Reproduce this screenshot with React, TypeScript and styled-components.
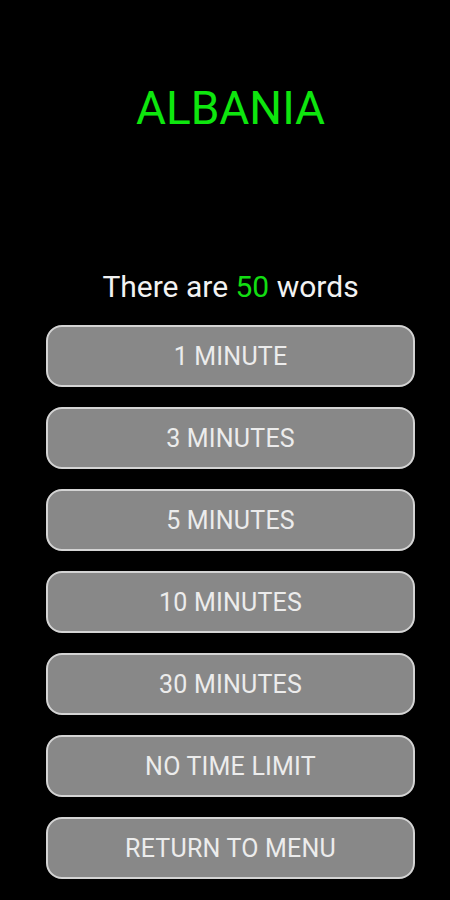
import React from 'react';
import styled, { createGlobalStyle } from 'styled-components';

const GlobalStyle = createGlobalStyle`
  html, body {
    margin: 0;
    padding: 0;
    background: #000;
  }
  body {
    font-family: Roboto, "Noto Sans", Arial, sans-serif;
  }
`;

const Screen = styled.div`
  width: 450px;
  height: 900px;
  background: #000;
  display: flex;
  flex-direction: column;
  align-items: center;
  box-sizing: border-box;
  padding: 83px 0 0 11px;
`;

const Title = styled.h1`
  margin: 0;
  font-size: 46px;
  line-height: 50px;
  font-weight: 400;
  color: #0ee60e;
`;

const WordCount = styled.p`
  margin: 137px 0 0;
  font-size: 30px;
  line-height: 34px;
  color: #f2f2f2;

  span {
    color: #12dd12;
  }
`;

const ButtonList = styled.div`
  display: flex;
  flex-direction: column;
  gap: 20px;
  margin-top: 21px;
`;

const TimeButton = styled.button`
  width: 369px;
  height: 62px;
  box-sizing: border-box;
  background: #888888;
  border: 2px solid #d4d4d4;
  border-radius: 16px;
  color: #ececec;
  font-family: Roboto, "Noto Sans", Arial, sans-serif;
  font-size: 25px;
  letter-spacing: 0.2px;
  padding: 0;
  cursor: pointer;
`;

const options = [
  '1 MINUTE',
  '3 MINUTES',
  '5 MINUTES',
  '10 MINUTES',
  '30 MINUTES',
  'NO TIME LIMIT',
  'RETURN TO MENU',
];

const App: React.FC = () => {
  return (
    <>
      <GlobalStyle />
      <Screen>
        <Title>ALBANIA</Title>
        <WordCount>
          There are <span>50</span> words
        </WordCount>
        <ButtonList>
          {options.map((label) => (
            <TimeButton key={label}>{label}</TimeButton>
          ))}
        </ButtonList>
      </Screen>
    </>
  );
};

export default App;
